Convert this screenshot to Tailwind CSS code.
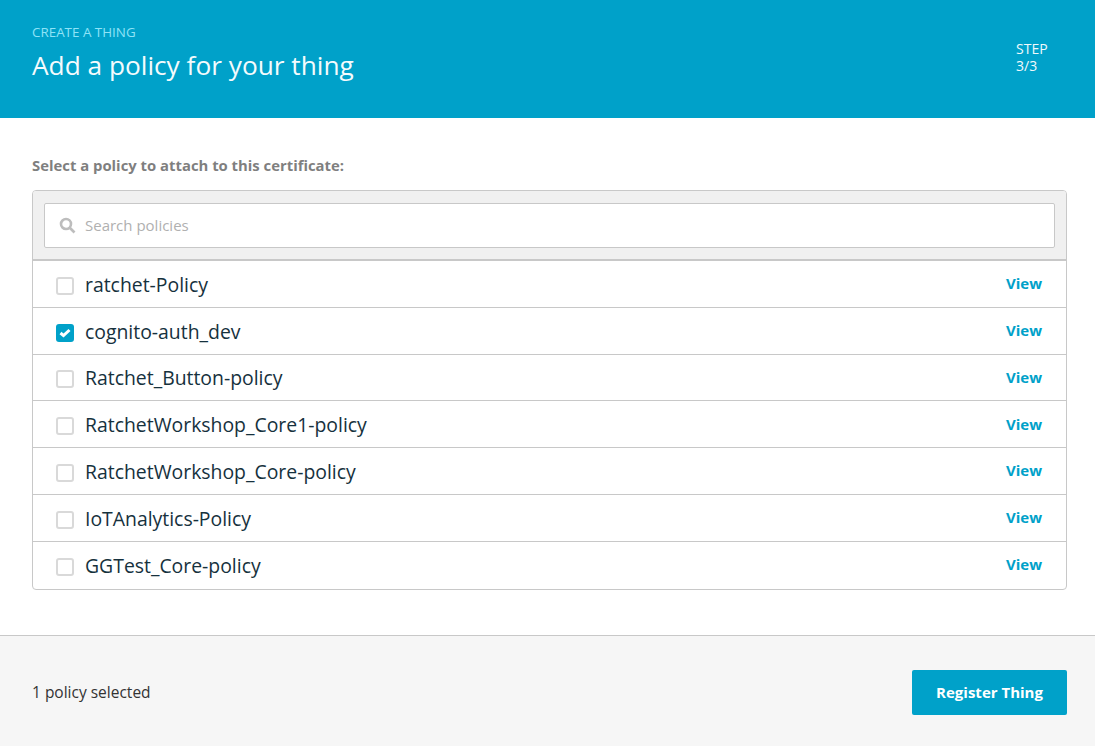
<!DOCTYPE html>
<html lang="en">
<head>
    <meta charset="UTF-8">
    <title>Add a policy for your thing</title>
    <script src="https://cdn.jsdelivr.net/npm/@tailwindcss/browser@4"></script>
</head>
<body class="bg-white font-['Open_Sans','Liberation_Sans',sans-serif] text-[#16313d] overflow-hidden">
<div class="w-[1095px] h-[746px] flex flex-col">
    <!-- header -->
    <div class="h-[118px] shrink-0 bg-[#00a1c9] pl-8 pr-[45px] pt-[24px] flex justify-between">
        <div>
            <div class="text-[13.4px] leading-4 text-[#8fe3f7]">CREATE A THING</div>
            <div class="text-[26.25px] leading-9 mt-[7px] text-[#f4fbfd]">Add a policy for your thing</div>
        </div>
        <div class="text-[14px] leading-[17px] text-[#f0f9fc] w-[34px] mt-[16px]">STEP 3/3</div>
    </div>

    <!-- body -->
    <div class="flex-1 pl-8 pr-[28px] pt-[37px]">
        <div class="text-[14.85px] leading-5 font-bold text-[#7f7f7f]">Select a policy to attach to this certificate:</div>
        <div class="mt-[15px] border border-[#c8c8c8] rounded-[4px] overflow-hidden">
            <div class="bg-[#f0f0f0] pt-[12px] px-[11px] h-[70px] border-b-2 border-[#c8c8c8]">
                <div class="h-[45px] bg-white border border-[#c8c8c8] rounded-[2px] flex items-center pl-[14px] gap-[9px]">
                    <svg width="17" height="17" viewBox="0 0 17 17" fill="none" stroke="#bdbdbd" stroke-width="2.6"><circle cx="7" cy="7" r="5"/><path d="M10.5 10.5l5 5"/></svg>
                    <span class="text-[15px] text-[#b0b0b0]">Search policies</span>
                </div>
            </div>
            <div>
                <div class="h-[46.8px] flex items-center pl-[23px] pr-[24px] border-b border-[#c8c8c8]">
                    <span class="mt-[4px] w-[18px] h-[18px] border-2 border-[#d9d9d9] rounded-[3px]"></span>
                    <span class="mt-[1px] ml-[11px] text-[19.4px] flex-1">ratchet-Policy</span>
                    <span class="mb-[1px] text-[15px] font-bold text-[#00a1c9]">View</span>
                </div>
                <div class="h-[46.8px] flex items-center pl-[23px] pr-[24px] border-b border-[#c8c8c8]">
                    <span class="mt-[4px] w-[18px] h-[18px] rounded-[3px] bg-[#00a1c9] flex items-center justify-center">
                        <svg width="12" height="10" viewBox="0 0 12 10" fill="none" stroke="#fff" stroke-width="3"><path d="M1.5 5l3 2.6 6-5.6"/></svg>
                    </span>
                    <span class="mt-[1px] ml-[11px] text-[19.4px] flex-1">cognito-auth_dev</span>
                    <span class="mb-[1px] text-[15px] font-bold text-[#00a1c9]">View</span>
                </div>
                <div class="h-[46.8px] flex items-center pl-[23px] pr-[24px] border-b border-[#c8c8c8]">
                    <span class="mt-[4px] w-[18px] h-[18px] border-2 border-[#d9d9d9] rounded-[3px]"></span>
                    <span class="mt-[1px] ml-[11px] text-[19.4px] flex-1">Ratchet_Button-policy</span>
                    <span class="mb-[1px] text-[15px] font-bold text-[#00a1c9]">View</span>
                </div>
                <div class="h-[46.8px] flex items-center pl-[23px] pr-[24px] border-b border-[#c8c8c8]">
                    <span class="mt-[4px] w-[18px] h-[18px] border-2 border-[#d9d9d9] rounded-[3px]"></span>
                    <span class="mt-[1px] ml-[11px] text-[19.4px] flex-1">RatchetWorkshop_Core1-policy</span>
                    <span class="mb-[1px] text-[15px] font-bold text-[#00a1c9]">View</span>
                </div>
                <div class="h-[46.8px] flex items-center pl-[23px] pr-[24px] border-b border-[#c8c8c8]">
                    <span class="mt-[4px] w-[18px] h-[18px] border-2 border-[#d9d9d9] rounded-[3px]"></span>
                    <span class="mt-[1px] ml-[11px] text-[19.4px] flex-1">RatchetWorkshop_Core-policy</span>
                    <span class="mb-[1px] text-[15px] font-bold text-[#00a1c9]">View</span>
                </div>
                <div class="h-[46.8px] flex items-center pl-[23px] pr-[24px] border-b border-[#c8c8c8]">
                    <span class="mt-[4px] w-[18px] h-[18px] border-2 border-[#d9d9d9] rounded-[3px]"></span>
                    <span class="mt-[1px] ml-[11px] text-[19.4px] flex-1">IoTAnalytics-Policy</span>
                    <span class="mb-[1px] text-[15px] font-bold text-[#00a1c9]">View</span>
                </div>
                <div class="h-[46.8px] flex items-center pl-[23px] pr-[24px]">
                    <span class="mt-[4px] w-[18px] h-[18px] border-2 border-[#d9d9d9] rounded-[3px]"></span>
                    <span class="mt-[1px] ml-[11px] text-[19.4px] flex-1">GGTest_Core-policy</span>
                    <span class="mb-[1px] text-[15px] font-bold text-[#00a1c9]">View</span>
                </div>
            </div>
        </div>
    </div>

    <!-- footer -->
    <div class="h-[111px] shrink-0 bg-[#f6f6f6] border-t border-[#c8c8c8] pl-8 pr-[28px] pt-[34px] flex items-start justify-between">
        <span class="text-[15.5px] leading-[45px] text-[#333]">1 policy selected</span>
        <button class="w-[155px] h-[45px] bg-[#00a1c9] text-white text-[15px] font-bold rounded-[2px]">Register Thing</button>
    </div>
</div>
</body>
</html>
